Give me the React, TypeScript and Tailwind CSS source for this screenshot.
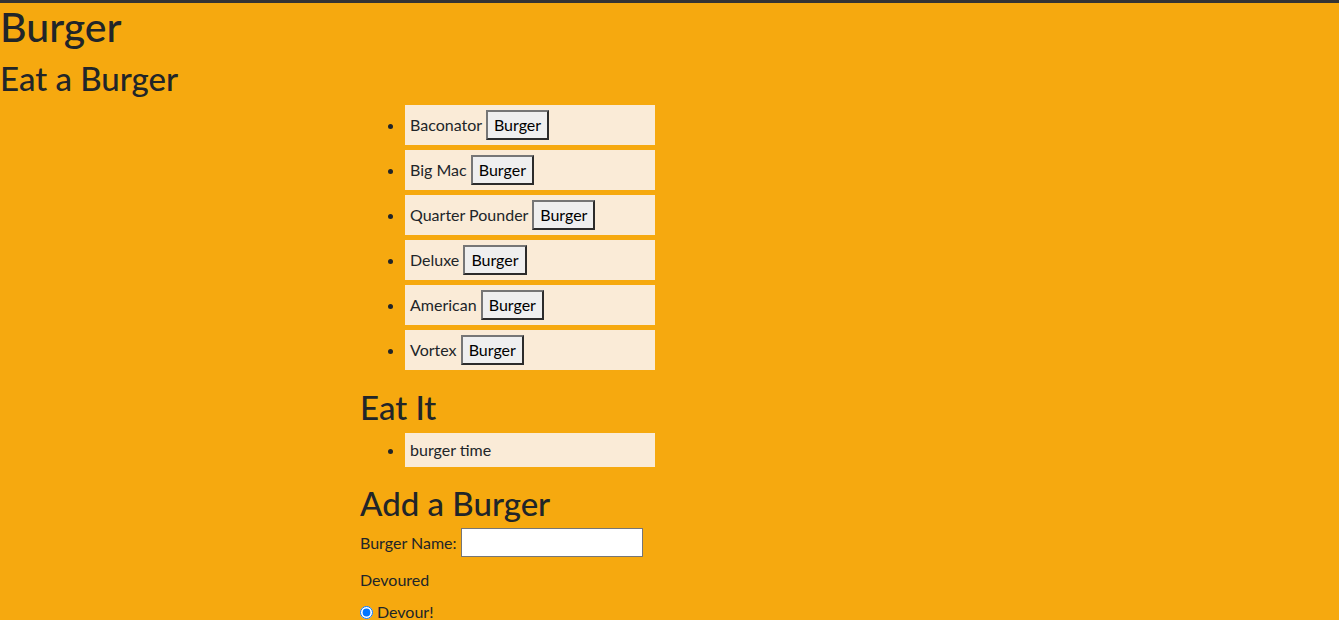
import React from 'react'

const BURGERS = ['Baconator', 'Big Mac', 'Quarter Pounder', 'Deluxe', 'American', 'Vortex']

export default function App() {
  return (
    <div
      className="h-screen overflow-hidden bg-[#f6a90f] border-t-[3px] border-[#343434] text-[#212529] text-[16px] leading-[1.5]"
      style={{ fontFamily: 'Lato, "Open Sans", sans-serif' }}
    >
      <h1 className="text-[41px] leading-[48px] font-medium mb-2">Burger</h1>
      <h2 className="text-[33px] leading-[38.4px] font-medium mb-2">Eat a Burger</h2>

      <div className="ml-[360px]">
        <ul className="list-disc pl-10 mb-4">
          {BURGERS.map(name => (
            <li key={name} className="w-[250px] m-[5px] p-[5px] bg-[#faebd7]">
              {name}{' '}
              <button className="h-[30px] px-[6px] py-px bg-[#efefef] border-2 border-[#767676] border-r-[#2b2b2b] border-b-[#2b2b2b] text-black">
                Burger
              </button>
            </li>
          ))}
        </ul>

        <h2 className="text-[33px] leading-[38.4px] font-medium pt-[2px] mb-[6px]">Eat It</h2>
        <ul className="list-disc pl-10 mb-4">
          <li className="w-[250px] m-[5px] p-[5px] bg-[#faebd7]">burger time</li>
        </ul>

        <h2 className="text-[33px] leading-[38.4px] font-medium pt-[1px] mb-[6px]">Add a Burger</h2>
        <form>
          <div className="flex items-center h-[29px]">
            <label className="mr-1">Burger Name:</label>
            <input type="text" className="w-[182px] h-[29px] bg-white border border-[#767676]" />
          </div>
          <div className="mt-[11px] mb-2">Devoured</div>
          <label className="flex items-center">
            <input type="radio" name="devoured" defaultChecked className="w-[13px] h-[13px] m-0 mr-1 accent-[#0075ff]" />
            Devour!
          </label>
        </form>
      </div>
    </div>
  )
}
